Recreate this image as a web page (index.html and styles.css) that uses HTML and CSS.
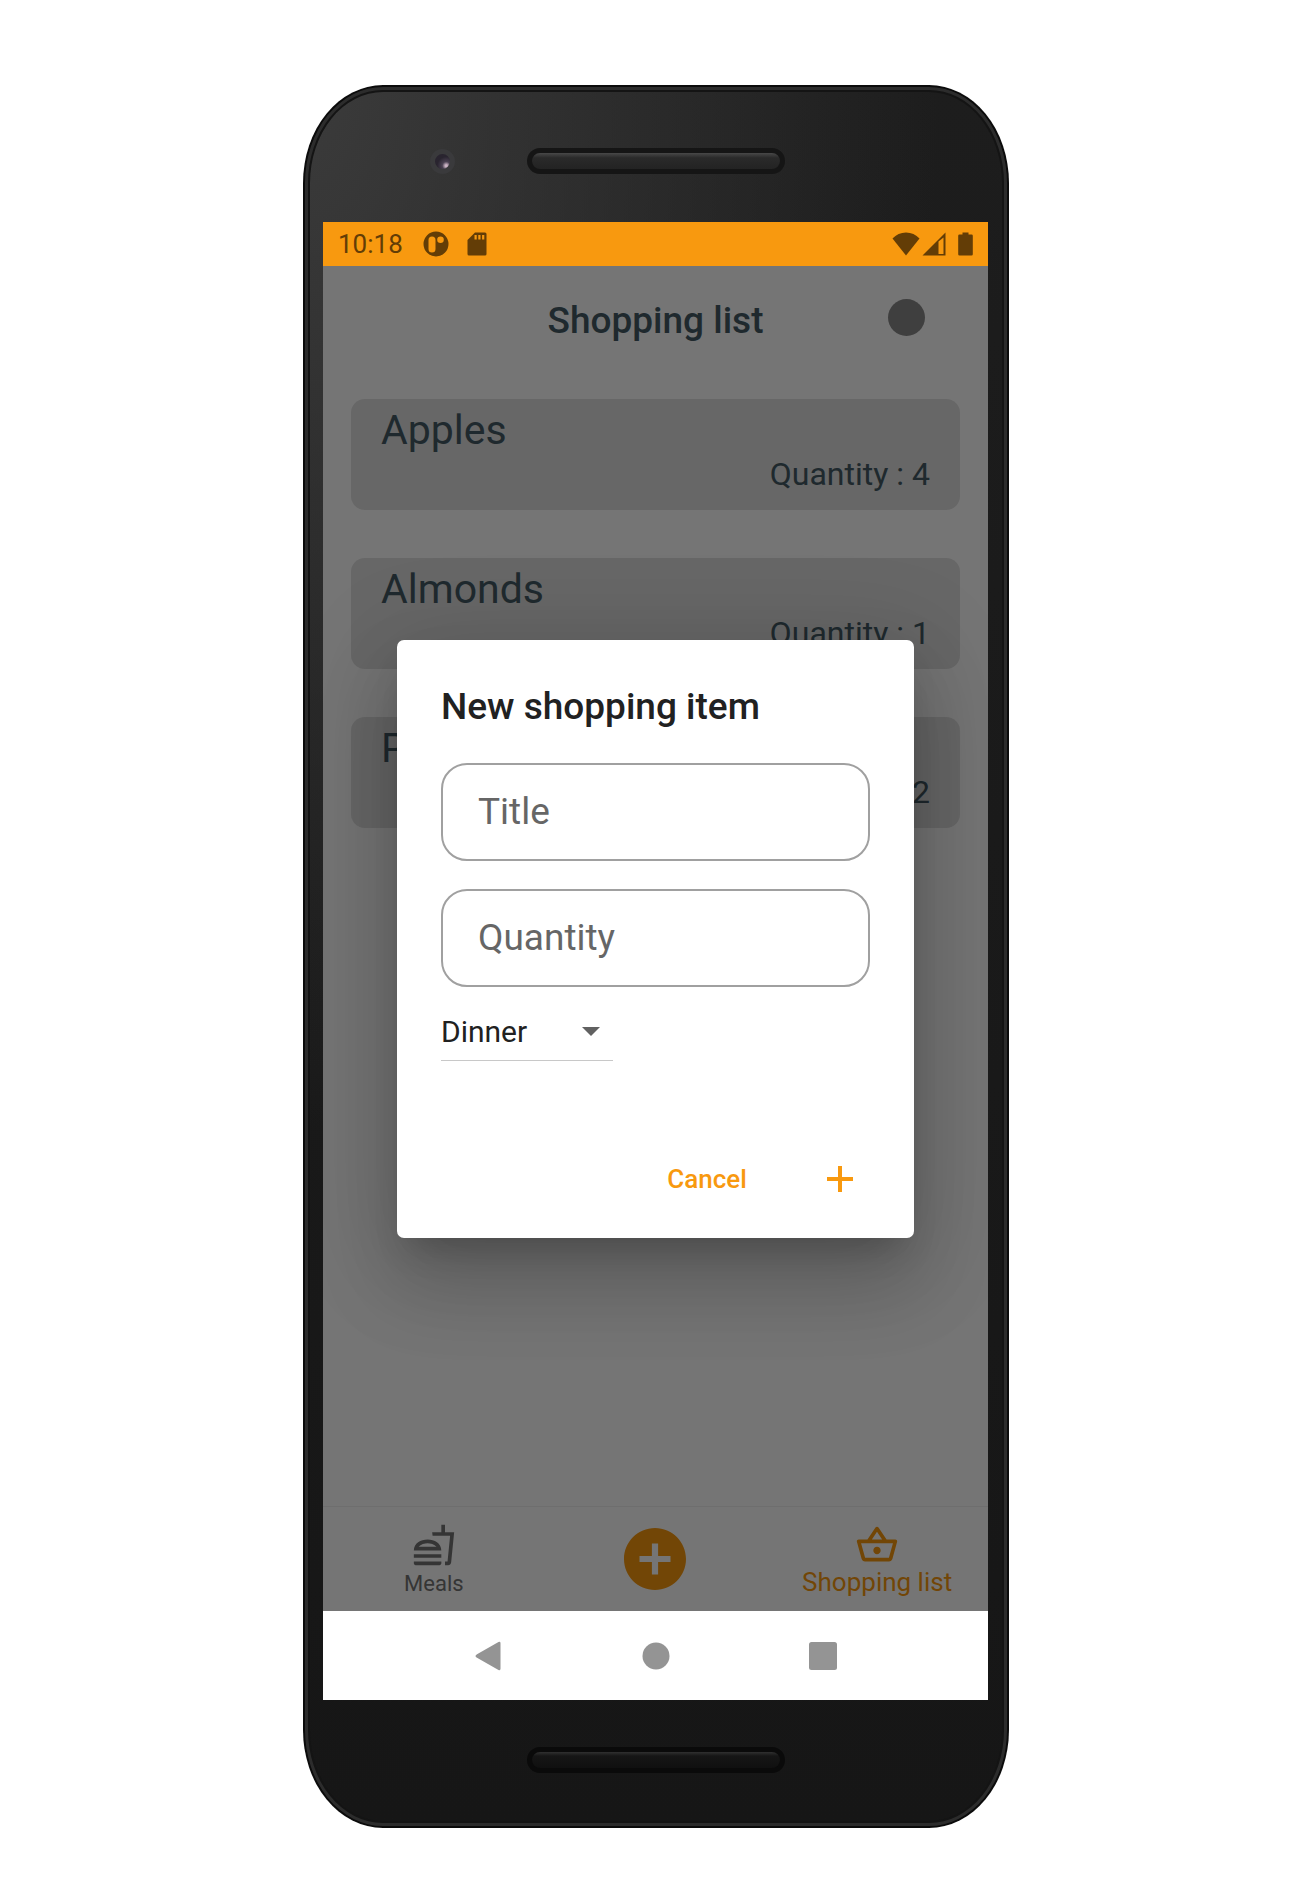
FILE: index.html
```html
<!DOCTYPE html>
<html lang="en">
<head>
<meta charset="utf-8">
<meta name="viewport" content="width=device-width, initial-scale=1">
<title>Shopping list</title>
<link rel="stylesheet" href="styles.css">
</head>
<body>
<div class="phone">
  <div class="bezel bezel-top">
    <span class="camera"></span>
    <span class="speaker"></span>
  </div>

  <div class="screen">
    <div class="status-bar">
      <span class="clock">10:18</span>
      <svg class="status-app" viewBox="0 0 26 26" aria-hidden="true"><path fill-rule="evenodd" d="M13 .5a12.5 12.5 0 1 0 0 25 12.5 12.5 0 0 0 0-25zM5.500 9a3.500 3.500 0 0 1 7 0v9a3.500 3.500 0 0 1-7 0zM17.500 5.500a3.300 3.300 0 1 1 0 6.600 3.300 3.300 0 0 1 0-6.600z"/></svg>
      <svg class="status-card" viewBox="0 0 20 24" aria-hidden="true"><path fill-rule="evenodd" d="M8 .5h10q1.500 0 1.500 1.500v20q0 1.500-1.500 1.500H2Q.5 23.500.5 22V8zM7.500 3v4.500h2.200V3zm3.800 0v4.500h2.200V3zm3.800 0v4.500h2.200V3z"/></svg>
      <span class="status-icons">
        <svg class="wifi" viewBox="0 0 28 24" aria-hidden="true"><path d="M14 23.500.5 6.500Q6 .5 14 .5t13.500 6z"/></svg>
        <svg class="signal" viewBox="0 0 24 24" aria-hidden="true"><path fill-rule="evenodd" d="M.5 23.500 23.500.5v23zM16.500 9.500v12.500h5V5.500z"/></svg>
        <svg class="battery" viewBox="0 0 15 24" aria-hidden="true"><path d="M4.500.5h6V2.500H13.500q1.300 0 1.300 1.300v18.400q0 1.300-1.300 1.300h-12q-1.300 0-1.300-1.300V3.800q0-1.300 1.300-1.300h3z"/></svg>
      </span>
    </div>

    <div class="app">
      <header class="app-header">
        <h1>Shopping list</h1>
        <span class="avatar"></span>
      </header>

      <ul class="items">
        <li class="item"><span class="item-name">Apples</span><span class="item-qty">Quantity : 4</span></li>
        <li class="item"><span class="item-name">Almonds</span><span class="item-qty">Quantity : 1</span></li>
        <li class="item"><span class="item-name">Pasta</span><span class="item-qty">Quantity : 2</span></li>
      </ul>

      <nav class="tabs">
        <a class="tab" href="#meals">
          <svg viewBox="0 0 24 24" aria-hidden="true"><path d="M1 21.980c0 .56.45 1.010 1.010 1.010H15c.56 0 1.010-.45 1.010-1.010V21H1zM8.500 8.990C4.750 8.990 1 11 1 15h15c0-4-3.750-6.010-7.500-6.010zM3.620 13c1.110-1.550 3.470-2.010 4.880-2.010s3.770.46 4.880 2.010zM1 17h15v2H1zM18 5V1h-2v4h-5l.23 2h9.560l-1.400 14H18v2h1.720c.84 0 1.530-.65 1.630-1.470L23 5z"/></svg>
          <span class="tab-label">Meals</span>
        </a>
        <a class="tab tab-add" href="#add" aria-label="Add">
          <svg viewBox="2 2 20 20" aria-hidden="true"><path d="M12 2C6.480 2 2 6.480 2 12s4.480 10 10 10 10-4.480 10-10S17.520 2 12 2zm5 11h-4v4h-2v-4H7v-2h4V7h2v4h4z"/></svg>
        </a>
        <a class="tab tab-active" href="#shopping-list" aria-current="page">
          <svg viewBox="0 0 24 24" aria-hidden="true"><path d="M22 9h-4.790l-4.380-6.560c-.19-.28-.51-.42-.83-.42s-.64.14-.83.43L6.790 9H2c-.55 0-1 .45-1 1 0 .09.01.18.04.27l2.540 9.270c.23.84 1 1.460 1.920 1.460h13c.92 0 1.690-.62 1.930-1.460l2.540-9.270L23 10c0-.55-.45-1-1-1zM12 4.800 14.800 9H9.200zM18.500 19l-12.990.01L3.310 11H20.700zM12 13c-1.100 0-2 .9-2 2s.9 2 2 2 2-.9 2-2-.9-2-2-2z"/></svg>
          <span class="tab-label">Shopping list</span>
        </a>
      </nav>

      <div class="scrim">
        <form class="dialog" role="dialog" aria-labelledby="dialog-title">
          <div class="dialog-body">
            <h2 id="dialog-title">New shopping item</h2>
            <div class="fields">
              <input class="field" type="text" placeholder="Title" aria-label="Title">
              <input class="field" type="text" placeholder="Quantity" aria-label="Quantity">
            </div>
            <div class="dropdown">
              <select aria-label="Meal">
                <option>Dinner</option>
              </select>
              <svg class="arrow" viewBox="0 0 18 9" aria-hidden="true"><path d="M0 0h18L9 9z"/></svg>
            </div>
          </div>
          <div class="actions">
            <button class="action" type="button">Cancel</button>
            <button class="action" type="submit" aria-label="Add item">
              <svg viewBox="0 0 26 26" aria-hidden="true"><path d="M11 0h4v11h11v4H15v11h-4V15H0v-4h11z"/></svg>
            </button>
          </div>
        </form>
      </div>
    </div>

    <div class="system-nav">
      <button class="system-button" type="button" aria-label="Back"><svg viewBox="0 0 30 30" aria-hidden="true"><path d="M3 13.200 24.500 1q2-.8 2 1.200v25.600q0 2-2 1.200L3 16.800q-3-1.800 0-3.600z"/></svg></button>
      <button class="system-button" type="button" aria-label="Home"><svg viewBox="0 0 30 30" aria-hidden="true"><circle cx="15" cy="15" r="13.500"/></svg></button>
      <button class="system-button" type="button" aria-label="Recent apps"><svg viewBox="0 0 30 30" aria-hidden="true"><rect x="1" y="1" width="28" height="28" rx="2.500"/></svg></button>
    </div>
  </div>

  <div class="bezel bezel-bottom">
    <span class="speaker speaker-low"></span>
  </div>
</div>
</body>
</html>
```
FILE: styles.css
```css
:root {
  --orange: #f8990f;
  --ink: #455a64;
  --muted: #757575;
}

* {
  box-sizing: border-box;
}

body {
  margin: 0;
  padding: 85px 24px 72px 36px;
  background: #fff;
  font-family: Roboto, "Liberation Sans", sans-serif;
}

h1,
h2,
ul {
  margin: 0;
  padding: 0;
}

button {
  padding: 0;
  border: 0;
  background: none;
  font-family: inherit;
}

svg {
  display: block;
  fill: currentColor;
}

/* Device frame */

.phone {
  max-width: 706px;
  margin: 0 auto;
  padding: 0 21px 0 20px;
  border-radius: 80px / 98px;
  background:
    radial-gradient(ellipse 90% 60% at 0 0, #3b3b3b, rgba(28, 28, 28, 0)),
    linear-gradient(#1d1d1d, #161616);
  box-shadow:
    inset 0 0 0 2px #0b0b0b,
    inset 0 0 0 5px #2c2c2c,
    inset 0 0 0 7px #141414;
}

.bezel {
  position: relative;
  display: flex;
  justify-content: center;
}

.bezel-top {
  height: 137px;
  padding-top: 63px;
}

.bezel-bottom {
  height: 128px;
  padding-top: 47px;
}

.speaker {
  width: 258px;
  height: 26px;
  border: 5px solid #151515;
  border-radius: 13px;
  background: linear-gradient(#484848, #2a2a2a 30%, #232323);
}

.speaker-low {
  border-color: #0a0a0a;
  background: linear-gradient(#303030, #161616 25%, #101010);
}

.camera {
  position: absolute;
  top: 64px;
  left: 107px;
  width: 25px;
  height: 25px;
  border: 5px solid #3a3a3c;
  border-radius: 50%;
  background: radial-gradient(circle at 75% 78%, #cbb3c4 0 1px, #4a4152 4px, #29242f 9px);
}

.screen {
  overflow: hidden;
  background: #fff;
}

/* Status bar */

.status-bar {
  display: flex;
  align-items: center;
  height: 44px;
  padding: 0 15px;
  background: var(--orange);
  color: #633d06;
}

.clock {
  font-size: 26px;
  line-height: 32px;
}

.status-app {
  width: 26px;
  height: 26px;
  margin-left: 20px;
}

.status-card {
  width: 20px;
  height: 24px;
  margin-left: 18px;
}

.status-icons {
  display: flex;
  align-items: center;
  margin-left: auto;
}

.wifi {
  width: 28px;
  height: 24px;
}

.signal {
  width: 24px;
  height: 24px;
  margin-left: 2px;
}

.battery {
  width: 15px;
  height: 24px;
  margin-left: 12px;
}

/* App */

.app {
  position: relative;
  display: flex;
  flex-direction: column;
  min-height: 1345px;
}

.app-header {
  display: grid;
  grid-template-columns: 1fr auto 1fr;
  align-items: start;
  height: 106px;
  padding: 33px 63px 0;
}

.app-header h1 {
  grid-column: 2;
  color: var(--ink);
  font-size: 37px;
  font-weight: 500;
  line-height: 44px;
}

.avatar {
  justify-self: end;
  width: 37px;
  height: 37px;
  border-radius: 50%;
  background: #8a8a8a;
}

.items {
  display: flex;
  flex: 1;
  flex-direction: column;
  gap: 48px;
  padding: 27px 28px;
  list-style: none;
}

.item {
  display: flex;
  flex-direction: column;
  gap: 1px;
  padding: 7px 30px 17px;
  border-radius: 14px;
  background: #e0e0e0;
  color: var(--ink);
}

.item-name {
  font-size: 41px;
  line-height: 48px;
}

.item-qty {
  font-size: 32px;
  line-height: 38px;
  text-align: right;
}

.tabs {
  display: grid;
  grid-template-columns: repeat(3, 1fr);
  height: 105px;
  border-top: 1px solid #f0f0f0;
}

.tab {
  display: flex;
  flex-direction: column;
  align-items: center;
  padding-top: 16px;
  color: var(--muted);
  font-size: 22px;
  line-height: 34px;
  text-decoration: none;
}

.tab svg {
  width: 44px;
  height: 44px;
}

.tab-active {
  color: var(--orange);
  font-size: 26px;
  line-height: 30px;
}

.tab-add {
  justify-content: center;
  padding-top: 0;
  color: var(--orange);
}

.tab-add svg {
  width: 62px;
  height: 62px;
}

/* Dialog */

.scrim {
  position: absolute;
  inset: 0;
  display: flex;
  align-items: center;
  justify-content: center;
  padding: 44px 74px;
  background: rgba(0, 0, 0, 0.54);
}

.dialog {
  flex: 1;
  border-radius: 7px;
  background: #fff;
  box-shadow:
    0 20px 33px -13px rgba(0, 0, 0, 0.2),
    0 44px 80px 6px rgba(0, 0, 0, 0.14),
    0 17px 98px 15px rgba(0, 0, 0, 0.12);
}

.dialog-body {
  padding: 45px 44px 0;
}

.dialog h2 {
  color: #212121;
  font-size: 37px;
  font-weight: 500;
  line-height: 44px;
}

.fields {
  display: flex;
  flex-direction: column;
  gap: 28px;
  margin-top: 34px;
}

.field {
  width: 100%;
  height: 98px;
  padding: 0 35px;
  border: 2px solid #a0a0a0;
  border-radius: 26px;
  background: #fff;
  color: #212121;
  font-family: inherit;
  font-size: 37px;
}

.field::placeholder {
  color: #666;
  opacity: 1;
}

.dropdown {
  display: grid;
  align-items: center;
  width: 172px;
  margin-top: 16px;
  border-bottom: 1px solid #c8c8c8;
}

.dropdown select,
.arrow {
  grid-area: 1 / 1;
}

.dropdown select {
  width: 100%;
  height: 57px;
  padding: 0;
  border: 0;
  appearance: none;
  background: none;
  color: #212121;
  font-family: inherit;
  font-size: 30px;
}

.arrow {
  justify-self: end;
  width: 18px;
  height: 9px;
  margin-right: 13px;
  color: #616161;
  pointer-events: none;
}

.actions {
  display: flex;
  justify-content: flex-end;
  gap: 15px;
  padding: 85px 15px 26px;
}

.action {
  display: flex;
  align-items: center;
  justify-content: center;
  width: 118px;
  height: 66px;
  color: var(--orange);
  font-size: 26px;
  font-weight: 500;
}

.action svg {
  width: 26px;
  height: 26px;
}

/* Android navigation */

.system-nav {
  display: flex;
  align-items: center;
  justify-content: center;
  gap: 137px;
  height: 89px;
}

.system-button {
  color: #949494;
}

.system-button svg {
  width: 30px;
  height: 30px;
}
```
